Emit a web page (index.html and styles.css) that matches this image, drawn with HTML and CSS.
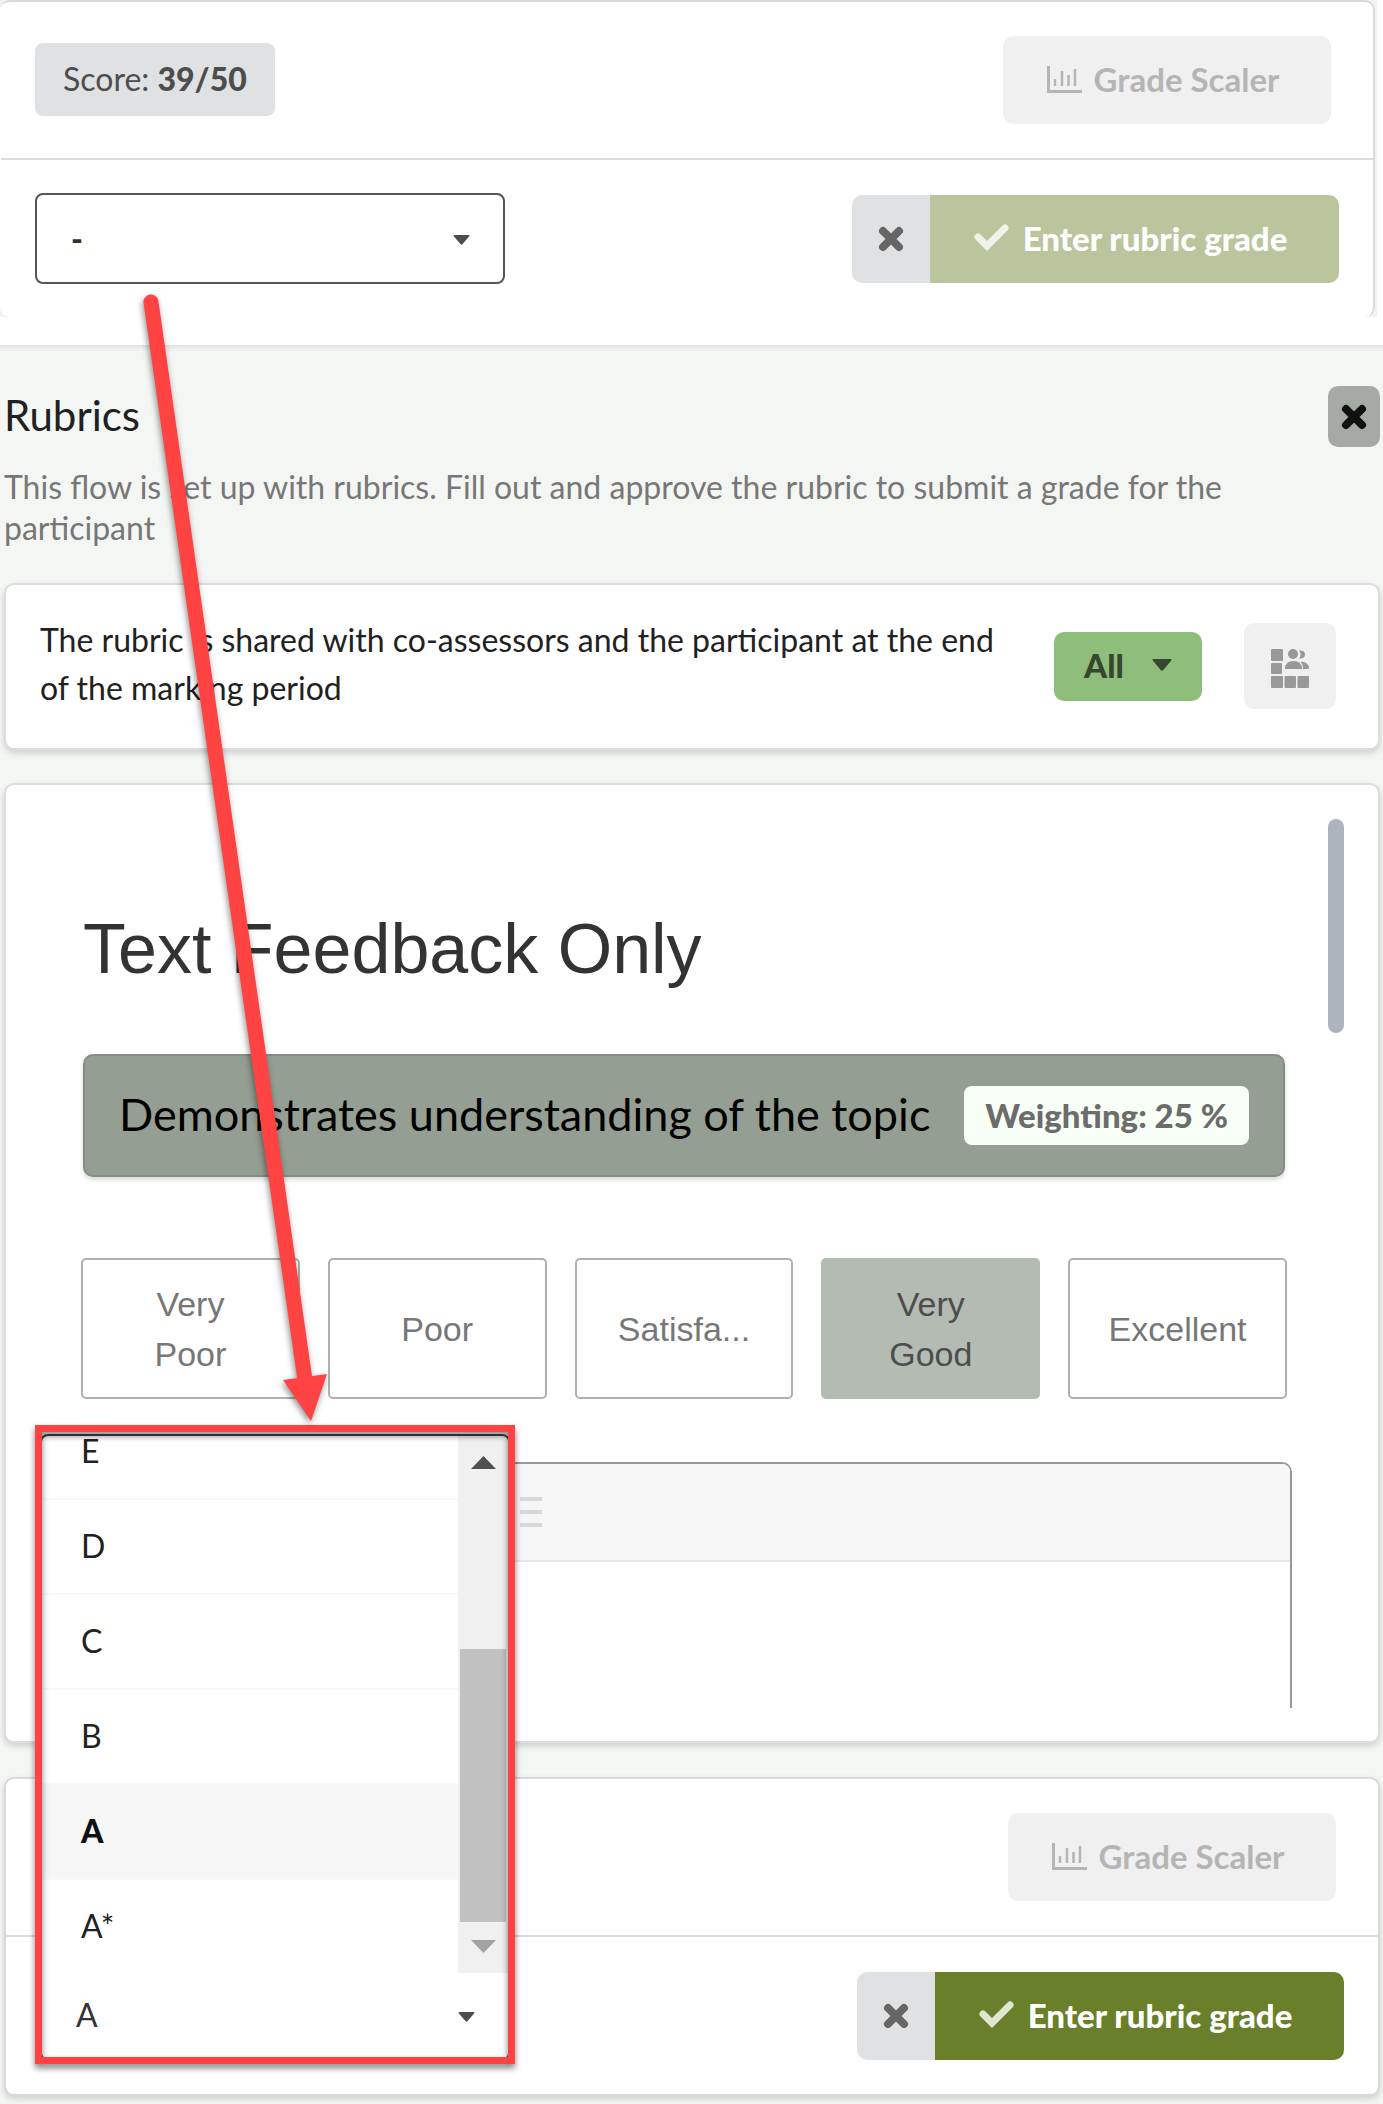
FILE: index.html
```
<!DOCTYPE html>
<html lang="en">
<head>
    <meta charset="UTF-8">
    <meta name="viewport" content="width=device-width, initial-scale=1.0">
    <title>Rubrics</title>
    <link rel="stylesheet" href="styles.css">
</head>
<body>
    <div class="page">
        <div class="top-panel">
            <div class="grade-card">
                <div class="grade-row">
                    <span class="score">Score: <strong>39/50</strong></span>
                    <button class="button scaler" disabled>
                        <svg class="icon-chart" viewBox="0 0 35 27" aria-hidden="true">
                            <path d="M1.500 0v25.500H35" fill="none" stroke="currentColor" stroke-width="3"/>
                            <path d="M8 13v7M15 5v15M21.500 9v11M28 3v17" fill="none" stroke="currentColor" stroke-width="2.500"/>
                        </svg>
                        Grade Scaler
                    </button>
                </div>
                <div class="grade-row grade-row-enter">
                    <div class="picker">
                        <select class="grade-select grade-empty" aria-label="Grade">
                            <option>-</option>
                        </select>
                        <svg class="caret" viewBox="0 0 18 11" aria-hidden="true"><path d="M1.500 0h15q2 0 .800 1.600L10.200 10q-1.200 1.500-2.400 0L.700 1.600Q-.500 0 1.500 0z" fill="currentColor"/></svg>
                    </div>
                    <div class="button-group">
                        <button class="button clear" aria-label="Clear grade">
                            <svg class="icon-cross" viewBox="0 0 30 26" aria-hidden="true"><path d="M7 5l16 16M23 5L7 21" stroke="currentColor" stroke-width="8" stroke-linecap="round"/></svg>
                        </button>
                        <button class="button enter enter-faded">
                            <svg class="icon-check" viewBox="0 0 35 27" aria-hidden="true"><path d="M4 13l9 9L31 4" fill="none" stroke="currentColor" stroke-width="7" stroke-linecap="round"/></svg>
                            Enter rubric grade
                        </button>
                    </div>
                </div>
            </div>
        </div>

        <div class="rubrics">
            <div class="rubrics-header">
                <h1>Rubrics</h1>
                <button class="close" aria-label="Close">
                    <svg class="icon-cross" viewBox="0 0 30 26" aria-hidden="true"><path d="M7 5l16 16M23 5L7 21" stroke="currentColor" stroke-width="8" stroke-linecap="round"/></svg>
                </button>
            </div>
            <p class="intro">This flow is set up with rubrics. Fill out and approve the rubric to submit a grade for the participant</p>

            <div class="card share">
                <p>The rubric is shared with co-assessors and the participant at the end of the marking period</p>
                <button class="share-all">
                    All
                    <svg class="caret-wide" viewBox="0 0 18 11" aria-hidden="true"><path d="M1.500 0h15q2 0 .800 1.600L10.200 10q-1.200 1.500-2.400 0L.700 1.600Q-.500 0 1.500 0z" fill="currentColor"/></svg>
                </button>
                <button class="share-grid" aria-label="Co-assessor rubrics">
                    <svg class="icon-grid" viewBox="0 0 38 39" fill="currentColor" aria-hidden="true">
                        <rect x="0" y="0" width="12" height="12" rx="1"/>
                        <rect x="0" y="14" width="11" height="11" rx="1"/>
                        <rect x="0" y="27" width="12" height="12" rx="1"/>
                        <rect x="13.500" y="27" width="11.500" height="12" rx="1"/>
                        <rect x="26.500" y="27" width="11.500" height="12" rx="1"/>
                        <circle cx="22" cy="5" r="5"/>
                        <path d="M14 20q0-8 8.500-8t8.500 8zM28 1.500q6-.500 6 4t-6 4q3-4 0-8zM29.500 12.500q8.500 0 8.500 7.500h-6q0-5-2.500-7.500z"/>
                    </svg>
                </button>
            </div>

            <div class="card sheet">
                <div class="sheet-content">
                    <h2>Text Feedback Only</h2>
                    <div class="criterion">
                        <h3>Demonstrates understanding of the topic</h3>
                        <span class="weighting">Weighting: 25 %</span>
                    </div>
                    <div class="ratings" role="radiogroup" aria-label="Rating">
                        <label class="rating"><input type="radio" name="rating"><span>Very Poor</span></label>
                        <label class="rating"><input type="radio" name="rating"><span>Poor</span></label>
                        <label class="rating"><input type="radio" name="rating"><span>Satisfa...</span></label>
                        <label class="rating"><input type="radio" name="rating" checked><span>Very Good</span></label>
                        <label class="rating"><input type="radio" name="rating"><span>Excellent</span></label>
                    </div>
                    <div class="editor">
                        <div class="editor-toolbar">
                            <button class="editor-button" aria-label="Numbered list">
                                <svg class="icon-list" viewBox="0 0 34 32" aria-hidden="true"><path d="M12 3h22M12 16h22M12 29h22M4 9v7M4 20v9" stroke="currentColor" stroke-width="4"/></svg>
                            </button>
                        </div>
                        <div class="editor-body" contenteditable="true"></div>
                    </div>
                </div>
                <div class="scroll-thumb"></div>
            </div>

            <div class="grade-card grade-card-bottom">
                <div class="grade-row">
                    <span></span>
                    <button class="button scaler" disabled>
                        <svg class="icon-chart" viewBox="0 0 35 27" aria-hidden="true">
                            <path d="M1.500 0v25.500H35" fill="none" stroke="currentColor" stroke-width="3"/>
                            <path d="M8 13v7M15 5v15M21.500 9v11M28 3v17" fill="none" stroke="currentColor" stroke-width="2.500"/>
                        </svg>
                        Grade Scaler
                    </button>
                </div>
                <div class="grade-row grade-row-enter">
                    <div class="picker">
                        <select class="grade-select grade-open" aria-label="Grade">
                            <option>A</option>
                        </select>
                        <svg class="caret" viewBox="0 0 18 11" aria-hidden="true"><path d="M1.500 0h15q2 0 .800 1.600L10.200 10q-1.200 1.500-2.400 0L.700 1.600Q-.500 0 1.500 0z" fill="currentColor"/></svg>
                        <!-- opened list, hangs above the select -->
                        <div class="dropdown">
                            <ul class="options" role="listbox" aria-label="Grades">
                                <li role="option">E</li>
                                <li role="option">D</li>
                                <li role="option">C</li>
                                <li role="option">B</li>
                                <li role="option" class="selected" aria-selected="true">A</li>
                                <li role="option">A*</li>
                            </ul>
                            <div class="scrollbar">
                                <svg class="scroll-arrow" viewBox="0 0 25 13" aria-hidden="true"><path d="M0 13L12.500 0 25 13z" fill="#505050"/></svg>
                                <div class="scrollbar-thumb"></div>
                                <svg class="scroll-arrow" viewBox="0 0 25 13" aria-hidden="true"><path d="M0 0h25L12.500 13z" fill="#a3a3a3"/></svg>
                            </div>
                        </div>
                        <div class="highlight"></div>
                    </div>
                    <div class="button-group">
                        <button class="button clear" aria-label="Clear grade">
                            <svg class="icon-cross" viewBox="0 0 30 26" aria-hidden="true"><path d="M7 5l16 16M23 5L7 21" stroke="currentColor" stroke-width="8" stroke-linecap="round"/></svg>
                        </button>
                        <button class="button enter">
                            <svg class="icon-check" viewBox="0 0 35 27" aria-hidden="true"><path d="M4 13l9 9L31 4" fill="none" stroke="currentColor" stroke-width="7" stroke-linecap="round"/></svg>
                            Enter rubric grade
                        </button>
                    </div>
                </div>
            </div>
        </div>

        <svg class="arrow" viewBox="0 0 340 1430" aria-hidden="true">
            <path d="M151 302L305 1380" stroke="#ff4343" stroke-width="15" stroke-linecap="round"/>
            <path d="M283 1380L327 1374 311 1421z" fill="#ff4343"/>
        </svg>
    </div>
</body>
</html>
```
FILE: styles.css
```
* {
    box-sizing: border-box;
}

body {
    margin: 0;
    background: #fff;
    color: #212121;
    font-family: Lato, "Open Sans", sans-serif;
    font-size: 32px;
    line-height: 48px;
}

h1, h2, h3, p, ul {
    margin: 0;
    padding: 0;
    font-weight: normal;
}

button, select {
    margin: 0;
    border: none;
    font: inherit;
}

svg {
    display: block;
    flex: none;
}

.page {
    position: relative;
}

/* grade card */
.top-panel {
    margin: 0 6px 28px 0;
    padding-right: 2px;
    background: #f1f2f1;
}

.grade-card {
    background: #fff;
    border: 2px solid #d8dad8;
    border-radius: 10px;
}

.top-panel .grade-card {
    border-left: none;
    border-bottom: none;
    padding-left: 1px;
}

.grade-card-bottom {
    box-shadow: 0 3px 6px rgba(0, 0, 0, 0.16);
}

.grade-row {
    display: flex;
    justify-content: space-between;
    align-items: center;
    padding: 34px 42px 34px 34px;
}

.grade-row-enter {
    padding: 33px 34px 33px 34px;
}

.grade-row + .grade-row {
    border-top: 2px solid #dcdcdc;
}

.score {
    margin-bottom: 2px;
    padding: 12px 28px 13px;
    border-radius: 8px;
    background: #e0e1e3;
    color: #4d4d4d;
}

.score strong {
    font-weight: 900;
}

.button {
    display: flex;
    align-items: center;
    justify-content: center;
    height: 88px;
    padding: 0;
    font-weight: bold;
    white-space: nowrap;
}

.scaler {
    gap: 12px;
    width: 328px;
    padding: 0 8px 2px 0;
    border-radius: 10px;
    background: #f0f0f0;
    color: #b5b5b5;
    font-size: 33px;
}

.icon-chart,
.icon-check {
    width: 35px;
    height: 27px;
}

.button-group {
    display: flex;
}

.clear {
    width: 78px;
    border-radius: 10px 0 0 10px;
    background: #e0e1e3;
    color: #666;
}

.icon-cross {
    width: 30px;
    height: 26px;
}

.enter {
    gap: 14px;
    width: 409px;
    padding: 0 8px 2px 0;
    border-radius: 0 10px 10px 0;
    background: #697f29;
    color: #fff;
    font-size: 33px;
    font-weight: 900;
}

.icon-check {
    color: #e1e5d4;
}

.enter-faded {
    background: #bbc59d;
}

.enter-faded .icon-check {
    color: #f1f3eb;
}

.picker {
    position: relative;
    width: 470px;
}

.grade-select {
    display: block;
    width: 100%;
    height: 91px;
    padding: 0 34px;
    border: 2px solid #555;
    border-radius: 8px;
    background: #fff;
    color: #333;
    appearance: none;
}

.grade-empty {
    font-weight: 900;
}

.grade-open {
    border-top: none;
    border-radius: 0 0 8px 8px;
}

.caret {
    position: absolute;
    top: 42px;
    right: 35px;
    width: 17px;
    height: 10px;
    color: #4d4d4d;
    pointer-events: none;
}

/* rubrics */
.rubrics {
    display: flow-root;
    padding: 41px 3px 8px 4px;
    background: #f4f6f4;
    box-shadow: inset 0 8px 5px -5px rgba(0, 0, 0, 0.08);
}

.rubrics-header {
    display: flex;
    justify-content: space-between;
    align-items: center;
    margin-bottom: 19px;
}

h1 {
    padding-bottom: 4px;
    font-size: 42px;
}

.close {
    display: flex;
    align-items: center;
    justify-content: center;
    width: 52px;
    height: 61px;
    padding: 0;
    border-radius: 10px;
    background: #a5aba4;
    color: #111;
}

.intro {
    margin-bottom: 35px;
    color: #777;
    line-height: 41px;
}

.card {
    display: flex;
    border: 2px solid #dcdedc;
    border-radius: 10px;
    background: #fff;
    box-shadow: 0 3px 6px rgba(0, 0, 0, 0.16);
}

.share {
    align-items: center;
    gap: 42px;
    margin-bottom: 33px;
    padding: 31px 42px 32px 34px;
}

.share p {
    flex: 1;
    padding-bottom: 4px;
}

.share-all {
    display: flex;
    align-items: center;
    justify-content: space-between;
    width: 148px;
    height: 69px;
    padding: 0 30px 2px;
    border-radius: 10px;
    background: #8fbe7a;
    color: #364730;
    font-size: 33px;
    font-weight: 900;
}

.caret-wide {
    width: 20px;
    height: 12px;
}

.share-grid {
    display: flex;
    align-items: center;
    justify-content: center;
    width: 92px;
    height: 86px;
    padding: 4px 0 0;
    border-radius: 10px;
    background: #f0f0f0;
    color: #999;
}

.icon-grid {
    width: 38px;
    height: 39px;
}

.sheet {
    gap: 43px;
    margin-bottom: 34px;
    padding: 34px 34px 33px 77px;
}

.sheet-content {
    flex: 1;
    min-width: 0;
    padding-top: 90px;
}

.scroll-thumb {
    width: 16px;
    height: 214px;
    border-radius: 8px;
    background: #adb4bd;
}

h2 {
    margin-bottom: 65px;
    color: #333;
    font-family: "Liberation Sans", Arial, sans-serif;
    font-size: 70px;
    line-height: 80px;
}

.criterion {
    display: flex;
    align-items: center;
    justify-content: space-between;
    height: 123px;
    margin-bottom: 81px;
    padding: 0 34px;
    border: 2px solid #868d84;
    border-radius: 10px;
    background: #959e93;
    box-shadow: 0 3px 4px rgba(0, 0, 0, 0.14);
}

h3 {
    padding-bottom: 4px;
    color: #000;
    font-size: 45px;
    white-space: nowrap;
}

.weighting {
    padding: 5px 21px 6px;
    border-radius: 8px;
    background: #f8fff6;
    color: #6c6c6c;
    font-size: 33px;
    font-weight: 900;
    white-space: nowrap;
}

.ratings {
    display: grid;
    grid-template-columns: repeat(5, 1fr);
    gap: 28px;
    margin: 0 -2px 63px;
}

.rating {
    display: flex;
    align-items: center;
    justify-content: center;
    height: 141px;
    padding: 0 36px;
    border: 2px solid #b0b0b0;
    border-radius: 5px;
    color: #777;
    font-family: "Liberation Sans", Arial, sans-serif;
    font-size: 34px;
    line-height: 50px;
    text-align: center;
}

.rating input {
    position: absolute;
    opacity: 0;
}

.rating:has(input:checked) {
    border-color: #b4bbb3;
    background: #b4bbb3;
    color: #4d4d4d;
}

.editor {
    margin: 0 -7px;
    border: 2px solid #999;
    border-bottom: none;
    border-radius: 10px 10px 0 0;
}

.editor-toolbar {
    display: flex;
    align-items: center;
    height: 98px;
    padding-left: 430px;
    border-bottom: 2px solid #e8e8e8;
    border-radius: 8px 8px 0 0;
    background: #f6f6f6;
}

.editor-button {
    padding: 0;
    background: none;
    color: #d8d8d8;
}

.icon-list {
    width: 34px;
    height: 32px;
}

.editor-body {
    height: 146px;
}

/* opened grade list */
.dropdown {
    position: absolute;
    right: 0;
    bottom: 88px;
    left: 0;
    display: flex;
    height: 539px;
    border: 2px solid #444;
    border-bottom: none;
    border-radius: 8px 8px 0 0;
    background: #fff;
    overflow: hidden;
}

.options {
    display: flex;
    flex: 1;
    flex-direction: column;
    justify-content: flex-end;
    list-style: none;
}

.options li {
    display: flex;
    flex: none;
    align-items: center;
    height: 95px;
    padding: 0 39px 2px;
    border-top: 2px solid #f8f8f8;
    line-height: 28px;
}

.options .selected {
    background: #f6f6f6;
    color: #111;
    font-weight: 900;
}

.scrollbar {
    display: flex;
    flex-direction: column;
    align-items: center;
    width: 50px;
    padding: 20px 0;
    background: #f0f0f0;
}

.scrollbar-thumb {
    width: 46px;
    height: 273px;
    margin: auto 0 18px;
    background: #c1c1c1;
}

.scroll-arrow {
    width: 25px;
    height: 13px;
}

/* annotation */
.highlight {
    position: absolute;
    right: -5px;
    bottom: -3px;
    left: -5px;
    height: 639px;
    border: 7px solid #ff4343;
    filter: drop-shadow(0 4px 3px rgba(0, 0, 0, 0.5));
    pointer-events: none;
}

.arrow {
    position: absolute;
    top: 0;
    left: 0;
    width: 340px;
    height: 1430px;
    filter: drop-shadow(-1px 3px 3px rgba(0, 0, 0, 0.45));
    pointer-events: none;
}
```
